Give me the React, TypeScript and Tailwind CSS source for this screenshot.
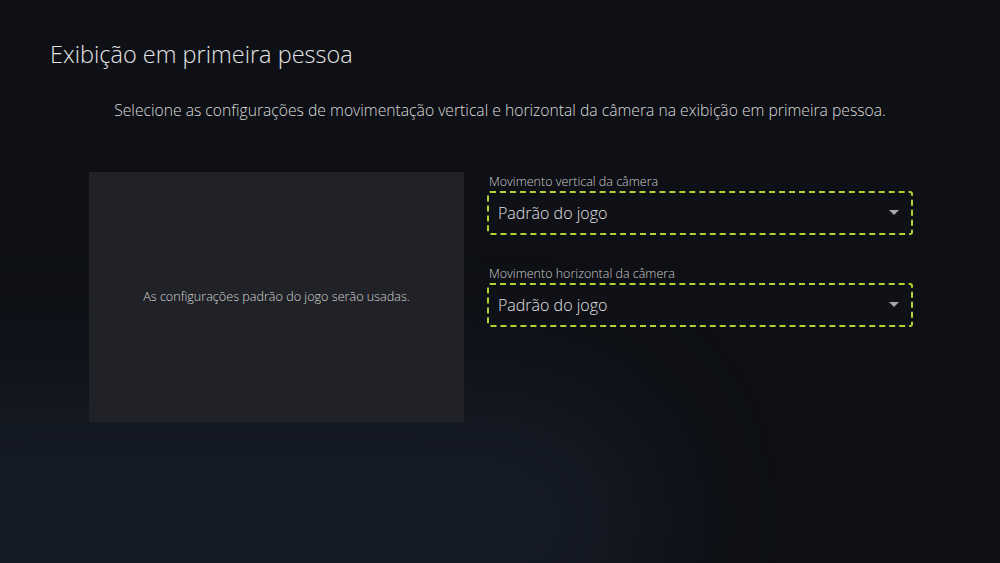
export default function App() {
  const fields = [
    { label: "Movimento vertical da câmera", value: "Padrão do jogo" },
    { label: "Movimento horizontal da câmera", value: "Padrão do jogo" },
  ];

  return (
    <div
      className="relative w-[1000px] h-[563px] overflow-hidden bg-[#0e1015] text-[#dcdcdc] font-light"
      style={{ fontFamily: '"Open Sans", "Noto Sans", sans-serif' }}
    >
      {/* bluish haze at bottom-left */}
      <div className="absolute left-[-200px] top-[390px] w-[850px] h-[260px] rounded-full bg-[#1b2434] opacity-60 blur-3xl" />

      <div className="relative flex flex-col">
        <h1 className="pl-[50px] pt-[38px] text-[23.5px] font-light leading-[32px] text-[#e4e4e4]">
          Exibição em primeira pessoa
        </h1>

        <p className="mt-[29px] text-center text-[15.7px] leading-[22px] text-[#dadada]">
          Selecione as configurações de movimentação vertical e horizontal da câmera na exibição em primeira pessoa.
        </p>

        <div className="mt-[51px] flex pl-[89px] gap-[23px]">
          {/* preview panel */}
          <div className="w-[375px] h-[250px] bg-[#202227] flex items-center justify-center">
            <span className="text-[12.6px] text-[#d4d4d4]">
              As configurações padrão do jogo serão usadas.
            </span>
          </div>

          {/* fields */}
          <div className="w-[426px] flex flex-col gap-[29px]">
            {fields.map((f) => (
              <div key={f.label} className="flex flex-col">
                <span className="pl-[2px] pt-[1px] text-[12.5px] leading-[18px] text-[#cccccc]">{f.label}</span>
                <div className="h-[44px] flex items-center justify-between rounded-[3px] border-2 border-dashed border-[#b4d132] bg-[#0f1116] pl-[9px] pr-[12px]">
                  <span className="text-[16px] text-[#e0e0e0]">{f.value}</span>
                  <svg width="10" height="6" viewBox="0 0 10 6">
                    <path d="M0 0 L10 0 L5 5 Z" fill="#a8a8a8" />
                  </svg>
                </div>
              </div>
            ))}
          </div>
        </div>
      </div>
    </div>
  );
}
